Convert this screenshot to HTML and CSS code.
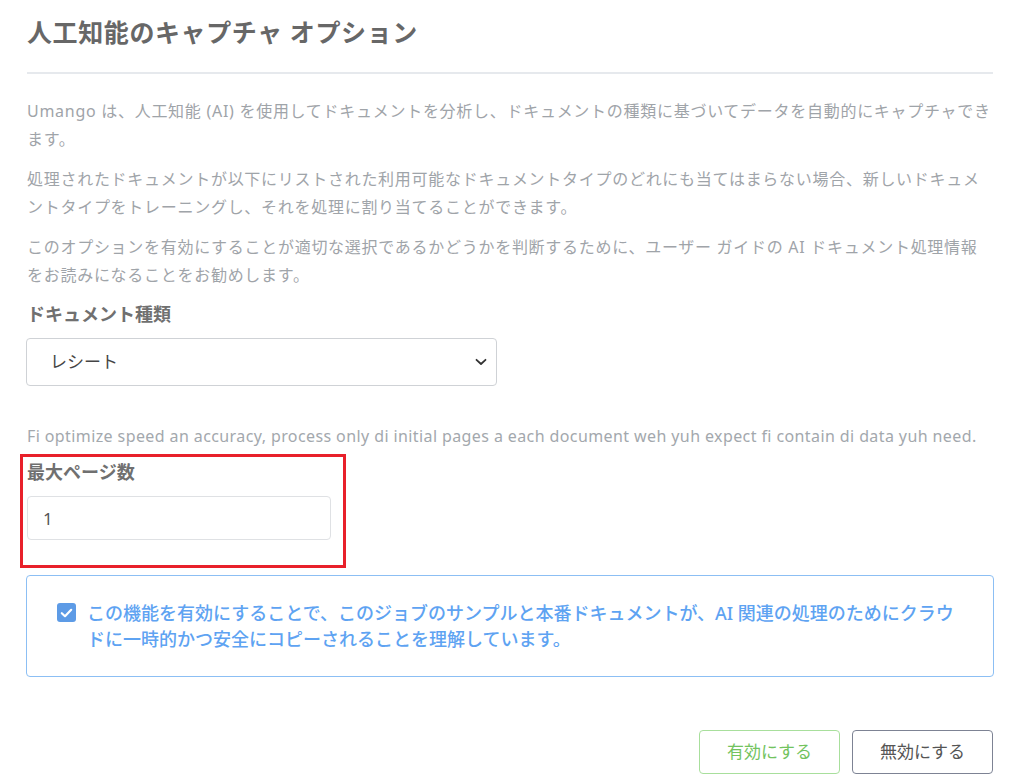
FILE: index.html
```html
<!DOCTYPE html>
<html lang="ja">
<head>
<meta charset="utf-8">
<link rel="stylesheet" href="styles.css">
</head>
<body>
<div class="page">
  <h1 class="title">人工知能のキャプチャ オプション</h1>
  <hr class="rule">
  <p class="para">Umango は、人工知能 (AI) を使用してドキュメントを分析し、ドキュメントの種類に基づいてデータを自動的にキャプチャできます。</p>
  <p class="para">処理されたドキュメントが以下にリストされた利用可能なドキュメントタイプのどれにも当てはまらない場合、新しいドキュメントタイプをトレーニングし、それを処理に割り当てることができます。</p>
  <p class="para">このオプションを有効にすることが適切な選択であるかどうかを判断するために、ユーザー ガイドの AI ドキュメント処理情報をお読みになることをお勧めします。</p>

  <div class="label label-doc">ドキュメント種類</div>
  <div class="select">
    <span class="select-text">レシート</span>
    <svg class="chev" width="12" height="8" viewBox="0 0 12 8"><path d="M1.5 1.8 L6 6 L10.5 1.8" fill="none" stroke="#333" stroke-width="1.8" stroke-linecap="round" stroke-linejoin="round"/></svg>
  </div>

  <p class="hint">Fi optimize speed an accuracy, process only di initial pages a each document weh yuh expect fi contain di data yuh need.</p>

  <div class="highlight">
    <div class="label">最大ページ数</div>
    <div class="input">1</div>
  </div>

  <div class="notice">
    <span class="check"><svg width="13" height="10" viewBox="0 0 13 10"><path d="M1.8 5.2 L5 8.2 L11.2 1.8" fill="none" stroke="#fff" stroke-width="2.2" stroke-linecap="round" stroke-linejoin="round"/></svg></span>
    <span class="notice-text">この機能を有効にすることで、このジョブのサンプルと本番ドキュメントが、AI 関連の処理のためにクラウドに一時的かつ安全にコピーされることを理解しています。</span>
  </div>

  <div class="actions">
    <button class="btn btn-enable">有効にする</button>
    <button class="btn btn-disable">無効にする</button>
  </div>
</div>
</body>
</html>
```
FILE: styles.css
```css
html, body {
  margin: 0;
  padding: 0;
  background: #ffffff;
}
body {
  font-family: "Noto Sans", "Noto Sans CJK JP", sans-serif;
}
.page {
  width: 966px;
  padding: 0 31px 0 27px;
}
.title {
  margin: 0;
  padding-top: 14px;
  font-size: 25px;
  line-height: 36px;
  font-weight: 700;
  letter-spacing: 0.6px;
  color: #676767;
}
.rule {
  margin: 22px 0 0;
  border: 0;
  border-top: 2px solid #e6e9ed;
  height: 0;
}
.para {
  margin: 23px 0 0;
  font-size: 16px;
  line-height: 28px;
  letter-spacing: 0.72px;
  color: #9fa4a9;
}
.para + .para {
  margin-top: 12px;
}
.label {
  font-size: 18px;
  line-height: 24px;
  font-weight: 700;
  color: #707070;
}
.label-doc {
  margin-top: 13px;
}
.select {
  margin-top: 12px;
  margin-left: -1px;
  width: 471px;
  height: 48px;
  box-sizing: border-box;
  border: 1px solid #cfd2d6;
  border-radius: 4px;
  display: flex;
  align-items: center;
  justify-content: space-between;
  padding: 0 9px 0 23px;
}
.select-text {
  font-size: 17px;
  color: #454545;
  position: relative;
  top: -2px;
}
.chev {
  display: block;
}
.hint {
  margin: 38px 0 0;
  font-size: 16px;
  line-height: 24px;
  letter-spacing: 0.4px;
  color: #a3a8ad;
}
.highlight {
  margin: 6px 0 0 -7px;
  width: 326px;
  box-sizing: border-box;
  border: 3px solid #e8202a;
  padding: 3px 4px 25px 4px;
}
.input {
  margin-top: 12px;
  width: 304px;
  height: 44px;
  box-sizing: border-box;
  border: 1px solid #dfe1e4;
  border-radius: 4px;
  padding-left: 15px;
  display: flex;
  align-items: center;
  font-size: 17px;
  color: #555;
}
.notice {
  margin: 7px 0 0 -1px;
  width: 968px;
  box-sizing: border-box;
  border: 1px solid #8cbff4;
  border-radius: 4px;
  padding: 24px 34px 24px 30px;
  display: flex;
  align-items: flex-start;
  gap: 11px;
}
.check {
  flex: none;
  width: 19px;
  height: 19px;
  margin-top: 3px;
  border-radius: 3px;
  background: #5d9be6;
  display: flex;
  align-items: center;
  justify-content: center;
}
.notice-text {
  font-size: 18px;
  line-height: 26px;
  font-weight: 500;
  color: #5ea3f2;
}
.actions {
  margin-top: 53px;
  display: flex;
  justify-content: flex-end;
  gap: 12px;
}
.btn {
  width: 141px;
  height: 44px;
  padding: 0 0 3px;
  border-radius: 4px;
  background: #fff;
  font-family: "Noto Sans", "Noto Sans CJK JP", sans-serif;
  font-size: 17px;
  cursor: pointer;
}
.btn-enable {
  border: 1px solid #a8df9c;
  color: #72c35e;
}
.btn-disable {
  border: 1px solid #7d8394;
  color: #555;
}
```
